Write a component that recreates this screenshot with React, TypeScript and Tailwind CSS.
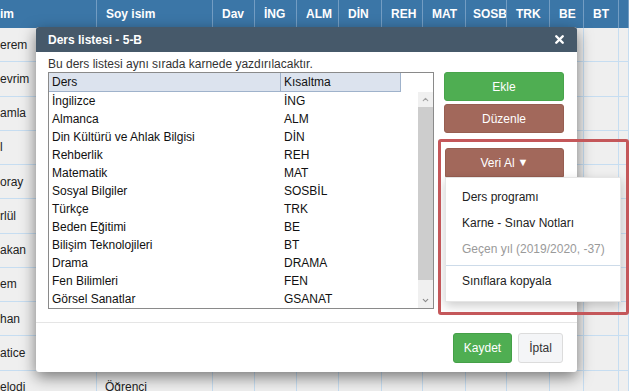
import { X, ChevronUp, ChevronDown } from "lucide-react";

const headers = ["im", "Soy isim", "Dav", "İNG", "ALM", "DİN", "REH", "MAT", "SOSB", "TRK", "BE", "BT", ""];
const names = ["erem", "evrim", "amla", "l", "oray", "rlül", "akan", "em", "han", "atice", "elodi"];

const lessons: [string, string][] = [
  ["İngilizce", "İNG"],
  ["Almanca", "ALM"],
  ["Din Kültürü ve Ahlak Bilgisi", "DİN"],
  ["Rehberlik", "REH"],
  ["Matematik", "MAT"],
  ["Sosyal Bilgiler", "SOSBİL"],
  ["Türkçe", "TRK"],
  ["Beden Eğitimi", "BE"],
  ["Bilişim Teknolojileri", "BT"],
  ["Drama", "DRAMA"],
  ["Fen Bilimleri", "FEN"],
  ["Görsel Sanatlar", "GSANAT"],
];

export default function App() {
  return (
    <div className="relative w-[629px] h-[391px] overflow-hidden bg-[#efefef] font-['Liberation_Sans',Arial,sans-serif] text-[12px] text-[#333]">
      {/* background table */}
      <div className="grid grid-cols-[97px_116px_42px_42px_42px_43px_41px_43px_41px_43px_34px_35px_1fr]">
        {headers.map((h, i) => (
          <div
            key={"h" + i}
            className={
              "h-[28px] bg-[#3b76a7] text-white font-bold flex items-center overflow-hidden whitespace-nowrap border-r border-[#739dc3] " +
              (i === 0 ? "pl-0" : i === 8 ? "pl-[7px]" : "pl-[9px]")
            }
          >
            {h}
          </div>
        ))}
        {names.map((n, r) =>
          headers.map((_, c) => (
            <div
              key={r + "-" + c}
              className={
                "h-[34.27px] bg-[#efefef] border-r border-b border-[#c6ddf1] flex items-center overflow-hidden whitespace-nowrap text-[#222] " +
                (c === 0 ? "pl-0" : "pl-[8px]")
              }
            >
              {c === 0 ? n : c === 1 && r === names.length - 1 ? "Öğrenci" : ""}
            </div>
          ))
        )}
      </div>

      {/* modal */}
      <div className="absolute left-[36px] top-[27px] w-[541px] bg-white rounded-[3px] shadow-[0_5px_15px_rgba(0,0,0,0.5)] flex flex-col">
        <div className="h-[25px] bg-[#46596a] rounded-t-[3px] flex items-center justify-between pl-[12px] pr-[11px]">
          <span className="text-white font-bold text-[12px]">Ders listesi - 5-B</span>
          <X size={13} strokeWidth={4.5} color="#ffffff" />
        </div>
        <div className="relative flex gap-[10px] pl-[12px] pr-[13px] pt-[4px] pb-[13px]">
          <div className="w-[386px] flex flex-col">
            <div className="h-[16px] leading-[16px] text-[#333]">Bu ders listesi aynı sırada karnede yazdırılacaktır.</div>
            <div className="h-[237px] border border-[#8a8a8a] bg-white flex flex-col text-[#111]">
              <div className="h-[19px] flex">
                <div className="w-[232px] bg-[#dce3ee] border-r border-b border-[#9fb2cb] pl-[3px] flex items-center">Ders</div>
                <div className="w-[120px] bg-[#dce3ee] border-r border-b border-[#9fb2cb] pl-[3px] flex items-center">Kısaltma</div>
              </div>
              <div className="flex flex-1">
                <div className="flex-1 flex flex-col">
                  {lessons.map(([d, k]) => (
                    <div key={d} className="h-[18px] flex items-center">
                      <span className="w-[232px] pl-[3px] whitespace-nowrap">{d}</span>
                      <span className="pl-[3px]">{k}</span>
                    </div>
                  ))}
                </div>
                <div className="w-[15px] flex flex-col bg-[#f0f0f0]">
                  <div className="h-[15px] flex items-center justify-center">
                    <ChevronUp size={9} strokeWidth={3} color="#a3a3a3" />
                  </div>
                  <div className="h-[173px] bg-[#cdcdcd]" />
                  <div className="flex-1" />
                  <div className="h-[15px] flex items-center justify-center">
                    <ChevronDown size={9} strokeWidth={3} color="#8a8a8a" />
                  </div>
                </div>
              </div>
            </div>
          </div>
          <div className="w-[120px] flex flex-col pt-[16px]">
            <div className="h-[29px] rounded-[3px] bg-[#4fae52] border border-[#48a44b] text-white flex items-center justify-center">Ekle</div>
            <div className="h-[29px] mt-[3px] rounded-[3px] bg-[#a2685b] border border-[#975e51] text-white flex items-center justify-center">Düzenle</div>
            <div className="h-[29px] mt-[15px] ml-[1px] rounded-t-[3px] bg-[#a2685b] border border-[#975e51] text-white flex items-center justify-center gap-[3px]">
              <span>Veri Al</span>
              <span className="text-[11px]">▼</span>
            </div>
          </div>
        </div>
        <div className="border-t border-[#e5e5e5] flex justify-end gap-[6px] pt-[10px] pb-[9px] pr-[14px]">
          <div className="w-[59px] h-[30px] rounded-[3px] bg-[#4fae52] border border-[#45a048] text-white flex items-center justify-center">Kaydet</div>
          <div className="w-[45px] h-[30px] rounded-[3px] bg-[#f4f5f7] border border-[#dcdcdc] text-[#333] flex items-center justify-center">İptal</div>
        </div>
      </div>

      {/* dropdown menu */}
      <div className="absolute left-[445px] top-[177px] w-[176px] h-[125px] bg-white border border-[rgba(0,0,0,0.1)] shadow-[0_4px_10px_rgba(0,0,0,0.2)] flex flex-col pt-[6px]">
        <div className="h-[26px] pl-[16px] flex items-center text-[#222]">Ders programı</div>
        <div className="h-[26px] pl-[16px] flex items-center text-[#222]">Karne - Sınav Notları</div>
        <div className="h-[26px] pl-[16px] flex items-center text-[#9a9a9a]">Geçen yıl (2019/2020, -37)</div>
        <div className="h-px bg-[#cddbe9] mt-[3px] mb-[2px]" />
        <div className="h-[26px] pl-[16px] flex items-center text-[#222]">Sınıflara kopyala</div>
      </div>

      {/* highlight annotation */}
      <div className="absolute left-[438px] top-[139px] w-[191px] h-[176px] border-[3px] border-[#c4575a] rounded-[3px]" />
    </div>
  );
}
